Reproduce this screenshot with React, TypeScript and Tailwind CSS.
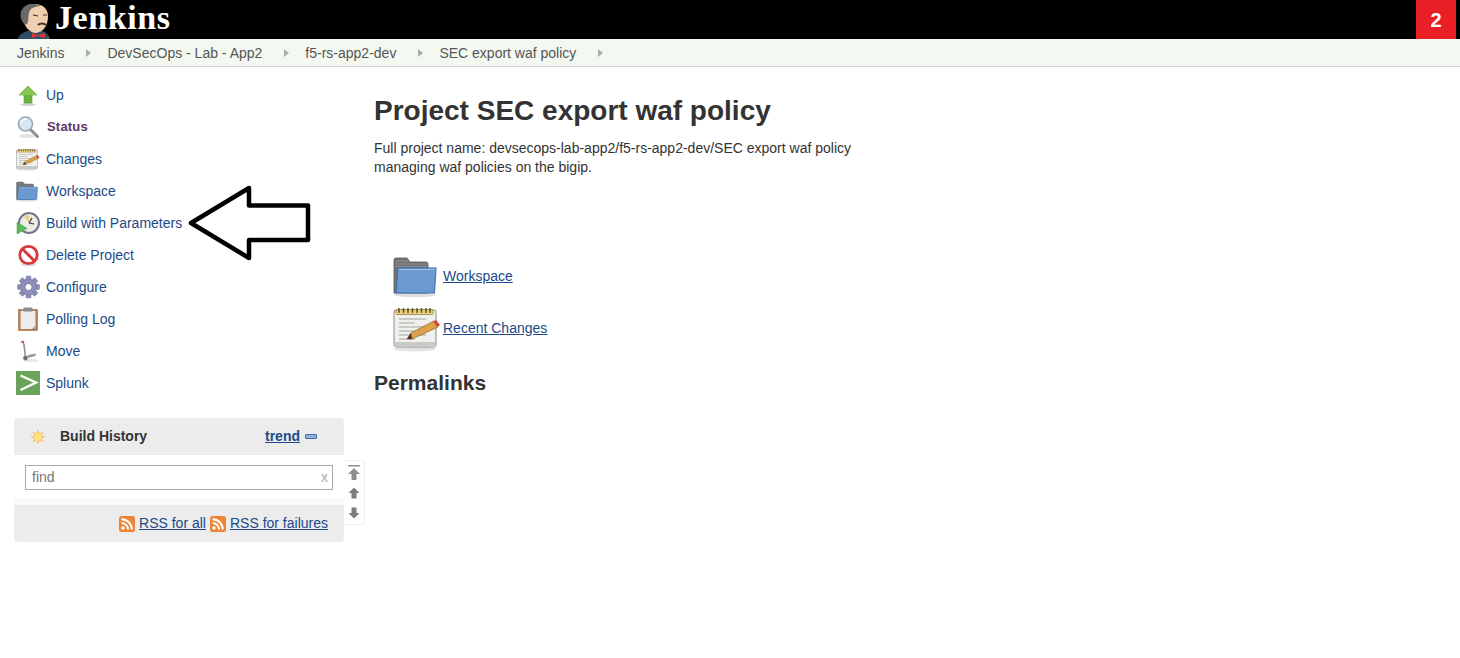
const UpIcon = () => (
  <svg width="24" height="24" viewBox="0 0 24 24">
    <ellipse cx="12" cy="21.5" rx="8" ry="1.5" fill="#cfcfcf" />
    <path d="M12 3 L21 12 H16 V20 H8 V12 H3 Z" fill="#6db33f" stroke="#5a9a35" strokeWidth="0.6" />
    <path d="M12 3 L21 12 H3 Z" fill="#84c553" />
  </svg>
);

const StatusIcon = () => (
  <svg width="24" height="24" viewBox="0 0 24 24">
    <ellipse cx="11" cy="21" rx="8" ry="2" fill="#e2e2e2" />
    <path d="M14.5 14.5 L21.5 21.5" stroke="#8a8f96" strokeWidth="3" strokeLinecap="round" />
    <circle cx="9.5" cy="9" r="7" fill="#d6e6f7" stroke="#9aa5b1" strokeWidth="1.6" />
    <path d="M5 8 A5 5 0 0 1 10 4" stroke="#fff" strokeWidth="1.6" fill="none" />
  </svg>
);

const NotepadIcon = ({ size = 24 }: { size?: number }) => (
  <svg width={size} height={size} viewBox="0 0 48 48">
    <ellipse cx="22" cy="45" rx="21" ry="2.5" fill="#e2e2e2" />
    <rect x="1" y="6" width="42" height="37" rx="2" fill="#f0f0ee" stroke="#8a8a86" strokeWidth="1" />
    <rect x="1.5" y="38" width="41" height="5" fill="#c9c9c6" />
    <rect x="3" y="5.5" width="37" height="5" rx="1" fill="#ecd27a" stroke="#8a7738" strokeWidth="0.7" />
    {[6, 10.5, 15, 19.5, 24, 28.5, 33, 37].map((x) => (
      <rect key={x} x={x - 0.8} y="4" width="1.6" height="5" rx="0.8" fill="#5f5228" />
    ))}
    {[15, 19, 23, 27, 31, 35].map((y, i) => (
      <path key={y} d={`M6 ${y} H${i % 2 ? 22 : 33}`} stroke="#ababa6" strokeWidth="1.1" />
    ))}
    <path d="M14 35 L18 29 L41 17 L45 23 L19 35 Z" fill="#dca24a" stroke="#8b5e20" strokeWidth="0.7" />
    <path d="M40 17.5 L43 16 L47 21 L44.5 23 Z" fill="#d8423d" />
    <path d="M14 35 L18 29 L19 35 Z" fill="#403426" />
  </svg>
);

const FolderIcon = ({ size = 24 }: { size?: number }) => (
  <svg width={size} height={size} viewBox="0 0 48 48">
    <ellipse cx="22" cy="43" rx="21" ry="2.2" fill="#dedede" />
    <path d="M1 8 a2 2 0 0 1 2 -2 H14 l3 4 H33 a2 2 0 0 1 2 2 V41 H1 Z" fill="#707276" stroke="#55575a" strokeWidth="0.8" />
    <path d="M2 9 H15 M2 12 H34 M2 14.5 H34" stroke="#9a9c9f" strokeWidth="0.7" />
    <path d="M5 16 H43 L41.5 41 H3 Z" fill="#6b9ad2" stroke="#3f6ea8" strokeWidth="1.1" />
    <path d="M6 17.5 H42" stroke="#a6c6ea" strokeWidth="1.1" />
  </svg>
);

const BuildIcon = () => (
  <svg width="24" height="24" viewBox="0 0 24 24">
    <circle cx="13" cy="12" r="10" fill="#ecebe4" stroke="#77728f" strokeWidth="2" />
    <path d="M13 12 L8 6 A8 8 0 0 1 13 4 Z" fill="#e8cf8a" />
    <path d="M13 12 L16 7 M13 12 L18 13" stroke="#333" strokeWidth="1.2" />
    <path d="M1 11 L11 17.5 L1 23 Z" fill="#5cb85c" stroke="#4a9a3e" strokeWidth="0.5" />
  </svg>
);

const DeleteIcon = () => (
  <svg width="24" height="24" viewBox="0 0 24 24">
    <ellipse cx="12.5" cy="22" rx="8" ry="1.5" fill="#dddddd" />
    <circle cx="12.5" cy="12" r="8.7" fill="#fff" stroke="#d9373a" strokeWidth="2.8" />
    <path d="M6.5 6 L18.5 18" stroke="#d9373a" strokeWidth="3" />
  </svg>
);

const GearIcon = () => (
  <svg width="24" height="24" viewBox="0 0 24 24">
    <g fill="#8d90ba" stroke="#6f7299" strokeWidth="0.5">
      {[0, 45, 90, 135, 180, 225, 270, 315].map((a) => (
        <rect key={a} x="10" y="1" width="5" height="6" rx="1" transform={`rotate(${a} 12.5 12)`} />
      ))}
      <circle cx="12.5" cy="12" r="8" />
    </g>
    <circle cx="12.5" cy="12" r="3.6" fill="#fff" stroke="#666a8c" strokeWidth="0.8" />
  </svg>
);

const ClipboardIcon = () => (
  <svg width="24" height="24" viewBox="0 0 24 24">
    <rect x="2.5" y="2.5" width="19" height="21" fill="#b57a43" stroke="#996232" strokeWidth="0.5" />
    <rect x="4.5" y="4" width="15" height="18" fill="#ececec" />
    <rect x="7.5" y="0.5" width="9" height="4" rx="1" fill="#8b8b8b" />
    <path d="M16 22 L19.5 18.5 V22 Z" fill="#9a9a9a" />
  </svg>
);

const MoveIcon = () => (
  <svg width="24" height="24" viewBox="0 0 24 24">
    <ellipse cx="15" cy="21.5" rx="8" ry="1.5" fill="#e3e3e3" />
    <path d="M7 3 L8 6 L9.5 18 L19.5 15.5" fill="none" stroke="#8f8f8f" strokeWidth="1.6" />
    <path d="M5 3 L8 2.5" stroke="#c5434a" strokeWidth="1.6" />
    <path d="M12 16 L19.5 14.5 V17 L12 19 Z" fill="#9c9c9c" />
    <circle cx="9.5" cy="19" r="2.5" fill="#6e6e6e" stroke="#d8d8d8" strokeWidth="0.6" />
  </svg>
);

const SplunkIcon = () => (
  <svg width="24" height="24" viewBox="0 0 24 24">
    <rect width="24" height="24" fill="#6aa35a" />
    <path d="M4.5 4.5 L20 11.5 L4.5 19" fill="none" stroke="#fff" strokeWidth="2.4" />
  </svg>
);

const SunIcon = () => (
  <svg width="16" height="16" viewBox="0 0 16 16">
    <g stroke="#f2c48a" strokeWidth="1.5">
      <path d="M8 1 V15 M1 8 H15 M3 3 L13 13 M13 3 L3 13" />
    </g>
    <circle cx="8" cy="8" r="4.4" fill="#fbe27c" stroke="#f2c45e" strokeWidth="0.8" />
  </svg>
);

const RssIcon = () => (
  <svg width="16" height="16" viewBox="0 0 16 16" className="shrink-0">
    <rect width="16" height="16" rx="2.5" fill="#ee8437" />
    <circle cx="4" cy="12" r="1.7" fill="#fff" />
    <path d="M2.5 7 A6.5 6.5 0 0 1 9 13.5 M2.5 3.2 A10.3 10.3 0 0 1 12.8 13.5" fill="none" stroke="#fff" strokeWidth="2" />
  </svg>
);

const Chevron = () => (
  <svg width="5" height="8" viewBox="0 0 5 8">
    <path d="M0 0 L5 4 L0 8 Z" fill="#a9afa6" />
  </svg>
);

const tasks = [
  { label: "Up", icon: <UpIcon /> },
  { label: "Status", icon: <StatusIcon />, active: true },
  { label: "Changes", icon: <NotepadIcon /> },
  { label: "Workspace", icon: <FolderIcon /> },
  { label: "Build with Parameters", icon: <BuildIcon /> },
  { label: "Delete Project", icon: <DeleteIcon /> },
  { label: "Configure", icon: <GearIcon /> },
  { label: "Polling Log", icon: <ClipboardIcon /> },
  { label: "Move", icon: <MoveIcon /> },
  { label: "Splunk", icon: <SplunkIcon /> },
];

const crumbs = ["Jenkins", "DevSecOps - Lab - App2", "f5-rs-app2-dev", "SEC export waf policy"];

export default function App() {
  return (
    <div className="relative min-h-[658px] bg-white text-[14px] text-[#333] font-['Liberation_Sans',Arial,sans-serif]">
      <header className="h-[39px] bg-black flex justify-between overflow-hidden">
        <div className="flex items-start pl-[17px]">
          <svg width="35" height="39" viewBox="0 0 35 39">
            <path d="M1 39 C2 34 7 32 11 31 H25 C29 32 32 35 33 39 Z" fill="#2f4d63" />
            <path d="M5 15 C4 7 10 4 18 4 C26 4 31 9 31 16 C31 25 27 32 19 33 C12 33 6 25 5 15 Z" fill="#f0cfae" />
            <path d="M5 21 C1 12 6 4 16 4 C20 4 23 5 24 6 C18 6 13 8 12 13 C11 17 12 21 10 24 C8 25 6 23 5 21 Z" fill="#6a6866" />
            <path d="M16 15 L21 16 M26 15 L30 15" stroke="#333" strokeWidth="1.2" />
            <path d="M21 25 C23 23 27 23 29 25" stroke="#3c3330" strokeWidth="1.8" fill="none" />
            <path d="M15 33 L21 35 L28 33 L28 38 L21 36 L15 38 Z" fill="#d33833" />
          </svg>
          <span className="ml-[3px] text-[34px] leading-[35px] font-bold text-white font-['Liberation_Serif',serif] tracking-[0.6px]">
            Jenkins
          </span>
        </div>
        <div className="w-[40px] mr-[4px] bg-[#ea1f26] flex items-center justify-center text-white text-[20px] font-bold">
          2
        </div>
      </header>

      <nav className="h-[28px] bg-[#f3f8f1] border-b border-[#d3d7cf] flex items-center pl-[17px] text-[#555] leading-[27px] pt-[1px]">
        {crumbs.map((label) => (
          <div key={label} className="flex items-center">
            <span className="mr-[22px]">{label}</span>
            <span className="mr-[16px] flex items-center">
              <Chevron />
            </span>
          </div>
        ))}
      </nav>

      <div className="flex">
        <aside className="w-[360px] shrink-0 pl-[14px] pt-[12px]">
          <ul className="flex flex-col">
            {tasks.map((t) => (
              <li key={t.label} className="h-[32px] flex items-center pl-[2px] text-[#204a87]">
                <span className="w-[24px] h-[24px] flex items-center justify-center shrink-0">{t.icon}</span>
                <span className={t.active ? "ml-[7px] font-bold text-[#5c3566] text-[13px] tracking-[0.2px]" : "ml-[6px]"}>{t.label}</span>
              </li>
            ))}
          </ul>

          <div className="relative mt-[19px] w-[330px] rounded-[4px] bg-[#ececec] overflow-visible">
            <div className="h-[37px] flex items-center pl-[16px] pr-[27px]">
              <SunIcon />
              <span className="ml-[14px] font-bold text-[#333]">Build History</span>
              <a className="ml-auto font-bold text-[#204a87] underline">trend</a>
              <span className="ml-[5px] w-[12px] h-[5px] rounded-[1px] bg-[#8fb0d8] border border-[#3f6ea8]" />
            </div>
            <div className="bg-white px-[11px] pt-[10px] pb-[8px]">
              <div className="h-[25px] border border-[#aaa] flex items-center justify-between pl-[6px] pr-[4px] text-[#777]">
                <span>find</span>
                <span className="text-[#aaa]">x</span>
              </div>
            </div>
            <div className="h-[7px] bg-[#fafafa]" />
            <div className="h-[37px] flex items-center justify-end pr-[16px] gap-[4px] text-[#204a87]">
              <RssIcon />
              <a className="underline">RSS for all</a>
              <RssIcon />
              <a className="underline">RSS for failures</a>
            </div>
            <div className="absolute left-[330px] top-[42px] w-[21px] h-[65px] bg-white border border-l-0 border-[#f0f0f0] rounded-r-[3px] flex flex-col items-center pt-[4px]">
              <svg width="12" height="15" viewBox="0 0 12 15">
                <path d="M0 0 H12 V1.5 H0 Z M6 3 L12 9 H8.5 V15 H3.5 V9 H0 Z" fill="#8f8f8f" />
              </svg>
              <svg className="mt-[7px]" width="12" height="12" viewBox="0 0 12 12">
                <path d="M6 0.5 L11.5 6 H8.5 V11.5 H3.5 V6 H0.5 Z" fill="#7d7d7d" />
              </svg>
              <svg className="mt-[8px]" width="12" height="12" viewBox="0 0 12 12">
                <path d="M6 11.5 L11.5 6 H8.5 V0.5 H3.5 V6 H0.5 Z" fill="#7d7d7d" />
              </svg>
            </div>
          </div>
        </aside>

        <main className="flex-1 pl-[14px] pt-[28px]">
          <h1 className="text-[28px] leading-[32px] font-bold">Project SEC export waf policy</h1>
          <p className="mt-[11px] leading-[20px]">
            Full project name: devsecops-lab-app2/f5-rs-app2-dev/SEC export waf policy
          </p>
          <p className="-mt-[1px] leading-[20px]">managing waf policies on the bigip.</p>

          <div className="mt-[75px] pl-[19px] flex flex-col gap-[4px]">
            <div className="h-[48px] flex items-center gap-[2px]">
              <FolderIcon size={48} />
              <a className="text-[#204a87] underline">Workspace</a>
            </div>
            <div className="h-[48px] flex items-center gap-[2px]">
              <NotepadIcon size={48} />
              <a className="text-[#204a87] underline">Recent Changes</a>
            </div>
          </div>

          <h2 className="mt-[18px] text-[21px] leading-[26px] font-bold">Permalinks</h2>
        </main>
      </div>

      {/* arrow drawn over the screenshot */}
      <svg className="absolute left-[185px] top-[183px]" width="128" height="80" viewBox="0 0 128 80">
        <path
          d="M6 40 L64 5 V22.5 H123 V57 H64 V75 Z"
          fill="#fff"
          stroke="#000"
          strokeWidth="4.5"
          strokeLinejoin="round"
        />
      </svg>
    </div>
  );
}
